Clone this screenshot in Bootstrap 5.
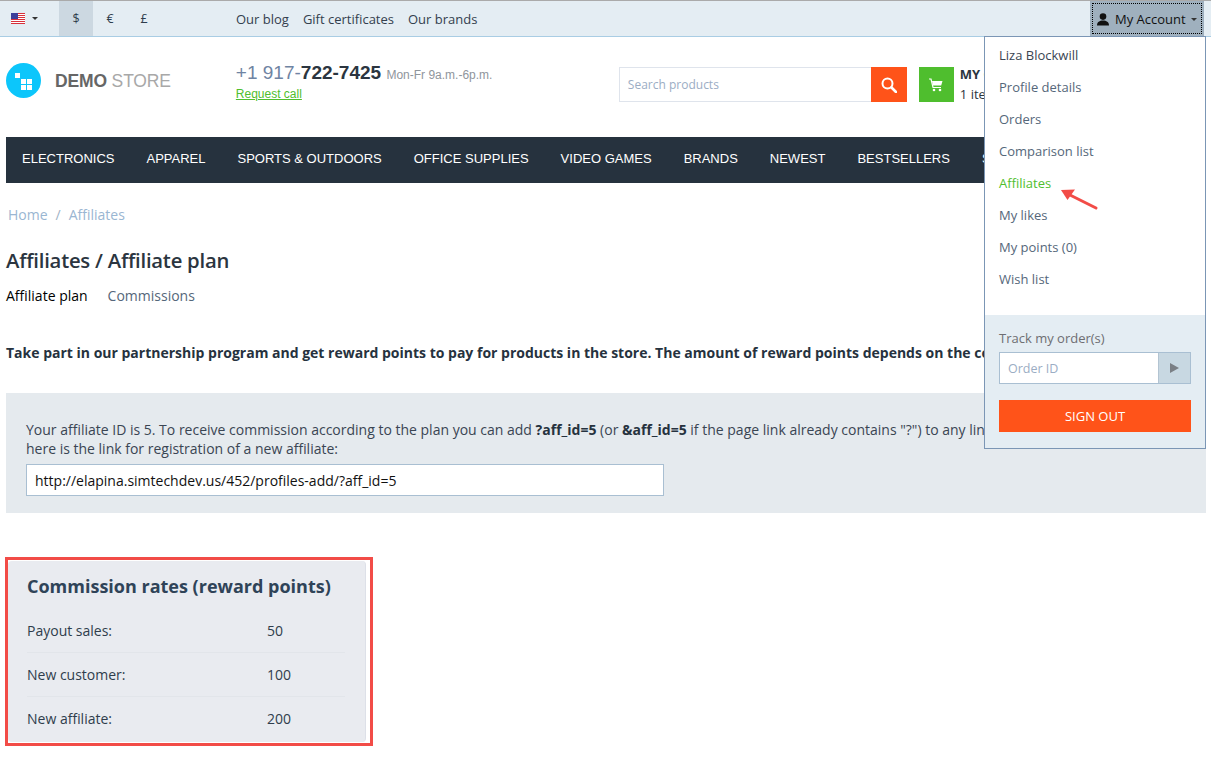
<!DOCTYPE html>
<html lang="en"><head><meta charset="utf-8"><title>Affiliates</title>
<link href="https://cdn.jsdelivr.net/npm/bootstrap@5.3.0/dist/css/bootstrap.min.css" rel="stylesheet">
<style>
html,body{height:761px;overflow:hidden}
body{font-family:"Open Sans",sans-serif;font-size:13px;color:#2b3540;background:#fff;position:relative}
a{text-decoration:none;color:inherit}
.topbar{height:37px;background:#e4edf3;border-top:1px solid #aaa;border-bottom:1px solid #a9cde4}
.flag-box{width:59px;padding-left:11px;gap:7px}
.caret{width:0;height:0;flex:none;border-left:3px solid transparent;border-right:3px solid transparent;border-top:3px solid #333}
.cur{width:34px;height:35px;display:flex;align-items:center;justify-content:center;color:#2f3d4c;font-size:12.5px;padding-top:2px}
.cur.on{background:#ccd8e1}
.toplinks{margin-left:75px;gap:14px;color:#33404e;padding-top:2px}
.acct{width:114px;height:35px;margin-right:7px;background:#9fb0be;padding:2px;flex:none}
.acct-in{border:1px dotted #000;width:100%;height:100%;gap:5px;color:#111;padding:2px 0 0 3px;white-space:nowrap}
.acct-in svg{flex:none}
.hdr{height:100px;padding-left:6px}
.logo-txt{font-family:"Liberation Sans",sans-serif;font-size:17.500px;margin-left:14px;color:#a8a8a8;white-space:nowrap;letter-spacing:-.15px;padding-top:1px}
.logo-txt b{color:#666}
.phone-box{margin-left:65px;width:383px}
.phone{font-family:"Liberation Sans",sans-serif;font-size:19px;color:#6f84a3;line-height:21px;white-space:nowrap}
.phone b{color:#2b3540}
.phone small{font-size:12px;color:#8f959c}
.req{font-family:"Liberation Sans",sans-serif;font-size:12px;color:#4fbe2e;text-decoration:underline;line-height:16px;display:block}
.srch{width:252px;height:35px;border:1px solid #dfe4ec;border-right:0;padding-left:8px;color:#9badc4;display:flex;align-items:center;font-size:12px}
.btn-srch{width:36px;height:35px;background:#ff5319}
.btn-cart{width:35px;height:35px;background:#4fbe2e;margin-left:12px}
.cart-txt{margin-left:6px;line-height:20px;margin-top:-3px;white-space:nowrap}
.mainnav{height:46px;margin:0 5px 0 6px;background:#26323e;color:#fff;font-family:"Liberation Sans",sans-serif;font-size:13px;padding:0 0 2px 16px;gap:32px;white-space:nowrap;overflow:hidden}
.crumbs{margin:23px 0 0 8px;height:18px;line-height:18px;color:#9ab6d2;font-size:14px}
.crumbs span{margin:0 8px;color:#9fb3c6}
.ttl{font-family:"Open Sans",sans-serif;font-weight:600;font-size:20.300px;letter-spacing:-.24px;margin:22px 0 0 6px;line-height:28px;color:#2b3540}
.tabsrow{margin:12px 0 0 6px;gap:20px;line-height:20px;font-size:14px;color:#000}
.tabsrow a+a{color:#55677a}
.lead-p{margin:37px 0 0 6px;font-weight:700;font-size:14px;line-height:20px;white-space:nowrap;color:#26323e}
.info{margin:30px 5px 0 6px;height:120px;background:#e5eaee;padding:27px 20px 0 20px;line-height:19px;font-size:14px;white-space:nowrap;overflow:hidden;color:#3a4553}
.info b{color:#26323e}
.urlbox{width:638px;height:32px;margin-top:6px;border:1px solid #a9bfd2;background:#fff;padding-left:8px;display:flex;align-items:center;color:#111;font-size:14px}
.rates-wrap{width:368px;height:189px;margin:44px 0 0 5px;border:3px solid #f24c47}
.rates{height:181px;width:358px;margin-top:1px;background:#e9ebf0;border-radius:4px;border-right:1px solid #dde0e8;padding:12px 20px 0 19px}
.rates h2{font-size:18px;font-weight:700;color:#2f4358;margin:0 0 10px;line-height:26px;white-space:nowrap}
.rate-row{height:44px;display:flex;align-items:center;border-bottom:1px solid #e2e5ea;font-size:14px;color:#2f3d4c}
.rate-row:last-child{border-bottom-color:transparent}
.rate-row span:first-child{width:240px}
.drop{position:absolute;left:984px;top:36px;width:222px;height:413px;background:#fff;border:1px solid #7b96b5;z-index:5;font-size:13px;color:#55677a}
.drop-list{padding:2px 14px 0;height:278px}
.drop-list div{height:32px;line-height:32px}
.drop-foot{height:133px;background:#e4edf3;padding:14px 14px 0}
.track{color:#6e6e72;line-height:18px;margin-bottom:5px}
.oid{height:32px;border:1px solid #a9bfd2;display:flex;background:#fff}
.oid span{flex:1;color:#9badc4;padding-left:8px;line-height:32px;font-size:12.500px}
.oid i{width:32px;background:#c8d8e2;border-left:1px solid #b3c4d2;display:flex;align-items:center;justify-content:center}
.signout{margin-top:16px;height:32px;background:#ff5319;color:#fff;text-align:center;line-height:32px}
.arrow{position:absolute;left:1059px;top:187px;z-index:6}
</style></head><body>
<div class="topbar d-flex align-items-center">
  <div class="flag-box d-flex align-items-center">
    <svg width="14" height="11" viewBox="0 0 14 11"><rect width="14" height="11" fill="#fff"/><g fill="#d8303a"><rect width="14" height="1"/><rect y="2" width="14" height="1"/><rect y="4" width="14" height="1"/><rect y="6" width="14" height="1"/><rect y="8" width="14" height="1"/><rect y="10" width="14" height="1"/></g><rect width="7" height="6" fill="#3c3f9a"/></svg>
    <span class="caret"></span>
  </div>
  <div class="d-flex"><a class="cur on" href="#">$</a><a class="cur" href="#">€</a><a class="cur" href="#">£</a></div>
  <div class="toplinks d-flex"><a href="#">Our blog</a><a href="#">Gift certificates</a><a href="#">Our brands</a></div>
  <div class="acct ms-auto"><div class="acct-in d-flex align-items-center">
    <svg width="14" height="13" viewBox="0 0 14 13"><circle cx="7" cy="3.600" r="3.300" fill="#111"/><path d="M1 12.500c0-3.600 2.600-5 6-5s6 1.400 6 5z" fill="#111"/></svg>
    <span>My Account</span><span class="caret"></span></div></div>
</div>
<div class="hdr d-flex align-items-start">
  <div class="d-flex align-items-center" style="margin-top:26px">
    <svg width="35" height="35" viewBox="0 0 35 35"><circle cx="17.500" cy="17.500" r="17.500" fill="#0cc6fb"/><g fill="#fff"><rect x="9" y="10" width="5" height="5"/><rect x="15" y="16" width="5" height="5"/><rect x="21" y="16" width="5" height="5"/><rect x="15" y="22" width="5" height="5"/><rect x="21" y="22" width="5" height="5"/></g></svg>
    <div class="logo-txt"><b>DEMO</b> STORE</div>
  </div>
  <div class="phone-box" style="margin-top:25px">
    <div class="phone">+1 917-<b>722-7425</b> <small>Mon-Fr 9a.m.-6p.m.</small></div>
    <a class="req" href="#">Request call</a>
  </div>
  <div class="d-flex" style="margin-top:30px">
    <div class="srch">Search products</div>
    <div class="btn-srch d-flex align-items-center justify-content-center"><svg width="16" height="16" viewBox="0 0 16 16" fill="none" stroke="#fff"><circle cx="6.500" cy="6.500" r="5" stroke-width="2"/><path d="M10.500 10.500l4.500 4.500" stroke-width="2.600" stroke-linecap="round"/></svg></div>
    <div class="btn-cart d-flex align-items-center justify-content-center"><svg width="14" height="14" viewBox="0 0 14 14" fill="none" stroke="#fff"><path d="M0 1h2l2 8.500h8" stroke-width="1.200"/><path d="M3 3h10.500l-1.300 4.500H4z" fill="#fff" stroke="none"/><circle cx="5" cy="12" r="1.300" fill="#fff" stroke="none"/><circle cx="11" cy="12" r="1.300" fill="#fff" stroke="none"/></svg></div>
    <div class="cart-txt"><b>MY CART</b><br>1 item(s)</div>
  </div>
</div>
<div class="mainnav d-flex align-items-center">
  <a href="#">ELECTRONICS</a><a href="#">APPAREL</a><a href="#">SPORTS &amp; OUTDOORS</a><a href="#">OFFICE SUPPLIES</a><a href="#">VIDEO GAMES</a><a href="#">BRANDS</a><a href="#">NEWEST</a><a href="#">BESTSELLERS</a><a href="#">SALE</a>
</div>
<div class="crumbs">Home<span>/</span>Affiliates</div>
<h1 class="ttl">Affiliates / Affiliate plan</h1>
<div class="tabsrow d-flex"><a href="#">Affiliate plan</a><a href="#">Commissions</a></div>
<p class="lead-p">Take part in our partnership program and get reward points to pay for products in the store. The amount of reward points depends on the commission.</p>
<div class="info">
  Your affiliate ID is 5. To receive commission according to the plan you can add <b>?aff_id=5</b> (or <b>&amp;aff_id=5</b> if the page link already contains "?") to any link of the store, and<br>here is the link for registration of a new affiliate:
  <div class="urlbox">http://elapina.simtechdev.us/452/profiles-add/?aff_id=5</div>
</div>
<div class="rates-wrap"><div class="rates">
  <h2>Commission rates (reward points)</h2>
  <div class="rate-row"><span>Payout sales:</span><span>50</span></div>
  <div class="rate-row"><span>New customer:</span><span>100</span></div>
  <div class="rate-row"><span>New affiliate:</span><span>200</span></div>
</div></div>
<div class="drop">
  <div class="drop-list">
    <div style="color:#3a4553">Liza Blockwill</div><div>Profile details</div><div>Orders</div><div>Comparison list</div><div style="color:#4fbe2e">Affiliates</div><div>My likes</div><div>My points (0)</div><div>Wish list</div>
  </div>
  <div class="drop-foot">
    <div class="track">Track my order(s)</div>
    <div class="oid"><span>Order ID</span><i><svg width="9" height="10" viewBox="0 0 9 10"><path d="M0 0l9 5-9 5z" fill="#7a7f85"/></svg></i></div>
    <div class="signout">SIGN OUT</div>
  </div>
</div>
<svg class="arrow" width="40" height="24" viewBox="0 0 40 24"><path d="M37 21L9 7" stroke="#f24c47" stroke-width="3" stroke-linecap="round"/><path d="M2 3l14-.5-7.500 10.500z" fill="#f24c47"/></svg>
</body></html>
